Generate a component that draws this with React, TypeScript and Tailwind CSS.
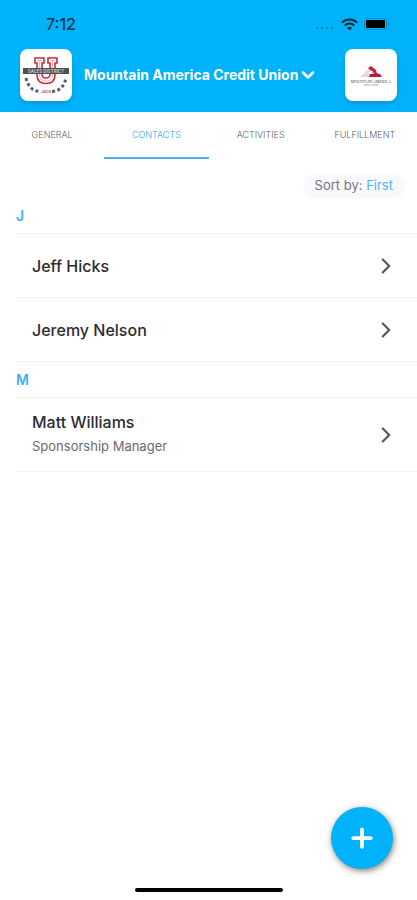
import { ChevronDown, ChevronRight, Plus } from "lucide-react";

const tabs = ["GENERAL", "CONTACTS", "ACTIVITIES", "FULFILLMENT"];

const sections = [
  {
    letter: "J",
    contacts: [
      { name: "Jeff Hicks", role: "" },
      { name: "Jeremy Nelson", role: "" },
    ],
  },
  {
    letter: "M",
    contacts: [{ name: "Matt Williams", role: "Sponsorship Manager" }],
  },
];

function StatusBar() {
  return (
    <div className="flex h-12 items-center justify-between pl-[46px] pr-[26px]">
      <span className="text-base font-medium text-[#06384f]">7:12</span>
      <div className="flex items-center gap-1.5">
        <svg width="20" height="12" viewBox="0 0 20 12" fill="#0b79a8">
          <circle cx="2" cy="10" r="1" />
          <circle cx="7" cy="10" r="1" />
          <circle cx="12" cy="10" r="1" />
          <circle cx="17" cy="10" r="1" />
        </svg>
        <svg width="17" height="13" viewBox="0 0 17 13" fill="none" stroke="#04293a" strokeWidth="2">
          <path d="M1 4.6a10.8 10.8 0 0 1 15 0" />
          <path d="M3.8 7.5a6.8 6.8 0 0 1 9.4 0" />
          <path d="M8.5 12.4 6 9.9a3.6 3.6 0 0 1 5 0z" fill="#04293a" stroke="none" />
        </svg>
        <svg width="27" height="12" viewBox="0 0 27 12">
          <rect x="0.5" y="0.5" width="22" height="11" rx="2.5" fill="none" stroke="#0591c9" />
          <rect x="2" y="2" width="19" height="8" rx="1" fill="#000" />
          <path d="M24 4v4c1.6-.6 1.6-3.4 0-4z" fill="#0677a5" />
        </svg>
      </div>
    </div>
  );
}

function TeamLogo() {
  return (
    <svg width="48" height="48" viewBox="0 0 48 48">
      <path
        d="M13 7h9v5h-2v11q0 4 4 4t4-4V12h-2V7h9v5h-2v12q0 8.500-9 8.500T15 24V12h-2z"
        fill="#fff"
        stroke="#c4313b"
        strokeWidth="1.6"
      />
      <path d="M15 9.500h5M28 9.500h5M17.500 10v14q0 6 6.500 6t6.500-6V10" fill="none" stroke="#dfa0a4" strokeWidth="0.8" />
      <rect x="1" y="17" width="46" height="6" fill="#4b4f55" />
      <text x="24" y="21.500" textAnchor="middle" fontSize="4.500" fontWeight="600" fill="#d5d7da">
        SALES DISTRICT
      </text>
      <path d="M4 27Q7 40 18 40.500" fill="none" stroke="#5a5e64" strokeWidth="3" strokeDasharray="3 2.500" />
      <path d="M30 40.500Q41 40 44 27" fill="none" stroke="#5a5e64" strokeWidth="3" strokeDasharray="3 2.500" />
      <text x="24" y="42" textAnchor="middle" fontSize="4" fontWeight="700" fill="#d0505a">
        JACK
      </text>
    </svg>
  );
}

function UnionLogo() {
  return (
    <svg width="48" height="48" viewBox="0 0 48 48">
      <path d="M13 26 23 17v4l-3 1 3 1v3z" fill="#f0d0d6" />
      <path d="m21 17 3-2 5 4 1 4-7-4z" fill="#c41f3e" />
      <path d="m22 26 1-3 4 0-2-2 8 2 2 3z" fill="#b91c3c" />
      <text x="24" y="32" textAnchor="middle" fontFamily="Liberation Serif, serif" fontSize="4" fill="#4b4348">
        MOUNTAIN AMERICA
      </text>
      <text x="24" y="35" textAnchor="middle" fontSize="2" fill="#77777d">
        CREDIT UNION
      </text>
    </svg>
  );
}

export default function App() {
  return (
    <div className="min-h-screen bg-white font-['Inter',sans-serif]">
      <header className="bg-[#00b2f9]">
        <StatusBar />
        <div className="flex h-16 items-start gap-3 px-5 pt-px">
          <div className="flex size-[52px] shrink-0 items-center justify-center rounded-lg bg-white shadow-md">
            <TeamLogo />
          </div>
          <button className="flex h-[52px] flex-1 items-center text-sm font-bold whitespace-nowrap text-white">
            Mountain America Credit Union
            <ChevronDown size={20} strokeWidth={3} />
          </button>
          <div className="flex size-[52px] shrink-0 items-center justify-center rounded-lg bg-white shadow-md">
            <UnionLogo />
          </div>
        </div>
      </header>

      <nav className="grid h-[47px] grid-cols-4">
        {tabs.map((tab) => (
          <button
            key={tab}
            className={`border-b-2 text-[9px] font-light ${
              tab === "CONTACTS"
                ? "border-[#4fb0ea] text-[#2ea6f0]"
                : "border-transparent text-[#5f5f62]"
            }`}
          >
            {tab}
          </button>
        ))}
      </nav>

      <main>
        <div className="flex justify-end pt-[15px] pr-3">
          <button className="h-6 rounded-full bg-[#f8f8fd] px-3 text-[13px] text-[#77777a]">
            Sort by: <span className="text-[#4db5f5]">First</span>
          </button>
        </div>
        {sections.map((section) => (
          <section key={section.letter} className="pl-4">
            <h2 className="flex h-[35px] items-center text-sm font-semibold text-[#41aef4]">
              {section.letter}
            </h2>
            <ul className="border-b border-[#f3f3f4]">
              {section.contacts.map((contact) => (
                <li key={contact.name} className="border-t border-[#f3f3f4]">
                  <button className="flex min-h-[63px] w-full items-center justify-between py-3 pr-[18px] pl-4 text-left">
                    <span>
                      <span className="block text-base font-medium text-[#2c2c2e]">
                        {contact.name}
                      </span>
                      {contact.role && (
                        <span className="block text-[13px] leading-[25px] text-[#6b6b6e]">
                          {contact.role}
                        </span>
                      )}
                    </span>
                    <ChevronRight size={26} color="#58585a" />
                  </button>
                </li>
              ))}
            </ul>
          </section>
        ))}
      </main>

      <button
        aria-label="Add contact"
        className="fixed right-6 bottom-[31px] flex size-[62px] items-center justify-center rounded-full bg-[#00b2f9] text-white shadow-[1px_2px_6px_rgba(60,40,30,0.6)]"
      >
        <Plus size={30} strokeWidth={3} />
      </button>
      <div className="fixed bottom-2 left-1/2 h-1 w-[148px] -translate-x-1/2 rounded-full bg-black" />
    </div>
  );
}
